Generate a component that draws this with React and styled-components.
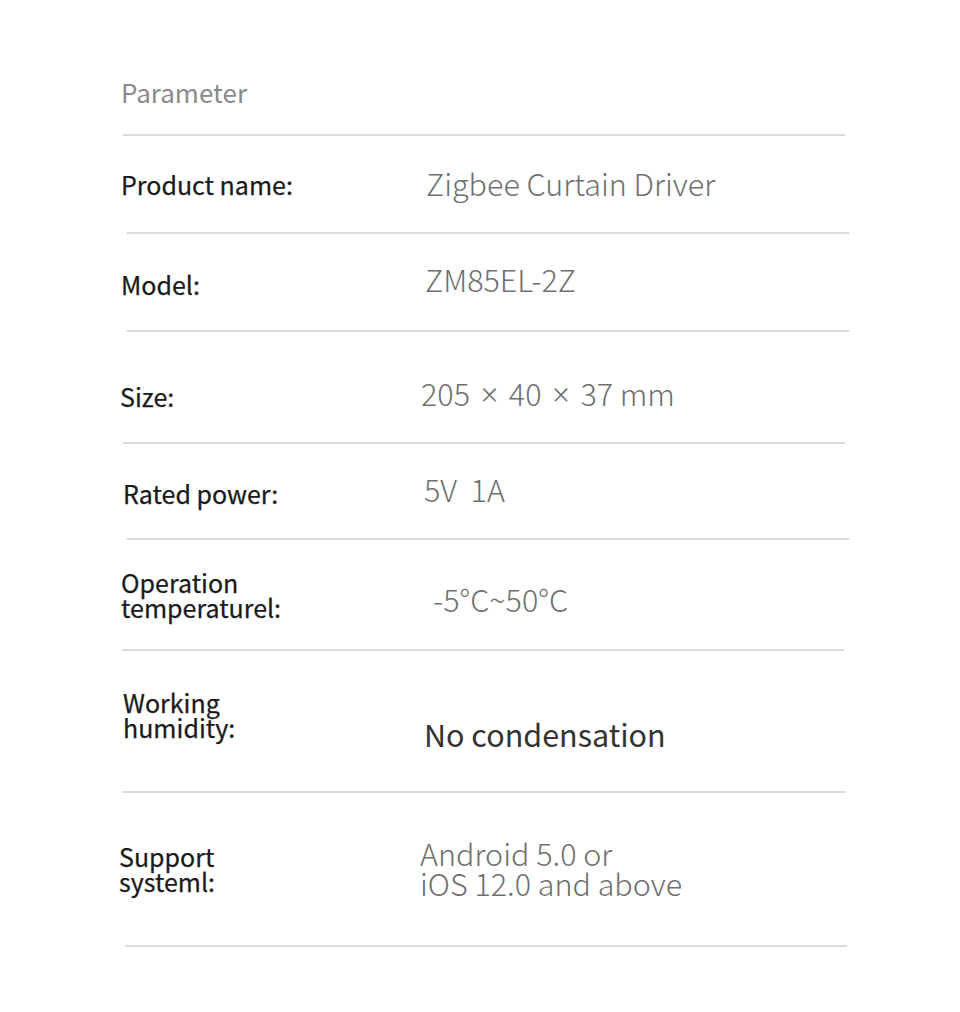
import React from "react";
import styled, { createGlobalStyle } from "styled-components";

const Global = createGlobalStyle`
  html, body { margin: 0; padding: 0; background: #ffffff; }
  body { font-family: "Noto Sans CJK SC", "Noto Sans", sans-serif; }
`;

const Page = styled.div`
  width: 960px;
  min-height: 1012px;
  padding-top: 79px;
  box-sizing: border-box;
  background: #fff;
`;

const Title = styled.h2`
  margin: 0 0 29px 121px;
  font-size: 26px;
  line-height: 26px;
  font-weight: 400;
  color: #8a8a8a;
`;

const Rule = styled.div`
  height: 2px;
  width: 722px;
  margin-left: ${(p) => p.$left}px;
  background: #d9d9d9;
`;

const Row = styled.div`
  display: grid;
  grid-template-columns: 300px 1fr;
  padding-left: 120px;
  height: ${(p) => p.$h}px;
  box-sizing: border-box;
`;

const Label = styled.div`
  padding-top: ${(p) => p.$top}px;
  margin-left: ${(p) => p.$x}px;
  font-size: 25px;
  line-height: ${(p) => p.$lh || 25}px;
  font-weight: 400;
  color: #1a1a1a;
  white-space: pre-wrap;
  -webkit-text-stroke: 0.25px #1a1a1a;
`;

const Value = styled.div`
  padding-top: ${(p) => p.$top}px;
  margin-left: ${(p) => p.$x}px;
  font-size: 30.5px;
  line-height: 30px;
  font-weight: ${(p) => (p.$strong ? 400 : 300)};
  color: ${(p) => (p.$strong ? "#333333" : "#6f6f6f")};
  white-space: pre-wrap;
`;

const Times = styled.span`
  font-family: "Noto Sans", "DejaVu Sans", sans-serif;
  font-weight: 300;
  margin: 0 4px;
`;

const rows = [
  { label: "Product name:", value: "Zigbee Curtain Driver", h: 96, lt: 36, lx: 1, vt: 32, vx: 6, rule: 127 },
  { label: "Model:", value: "ZM85EL-2Z", h: 96, lt: 38, lx: 1, vt: 30, vx: 5, rule: 127 },
  {
    label: "Size:",
    value: (
      <>
        205 <Times>×</Times> 40 <Times>×</Times> 37 mm
      </>
    ),
    h: 110, lt: 52, lx: 0, vt: 46, vx: 1, rule: 123,
  },
  { label: "Rated power:", value: "5V  1A", h: 94, lt: 37, lx: 3, vt: 30, vx: 4, rule: 127 },
  { label: "Operation\ntemperaturel:", value: "-5°C~50°C", h: 109, lt: 30, lx: 1, vt: 44, vx: 13, rule: 122 },
  { label: "Working\nhumidity:", value: "No condensation", h: 140, lt: 39, lx: 3, vt: 68, vx: 4, strong: true, rule: 123 },
  { label: "Support\nsysteml:", value: "Android 5.0 or\niOS 12.0 and above", h: 152, lt: 51, lx: -1, vt: 45, vx: 0, rule: 125 },
];

export default function App() {
  return (
    <Page>
      <Global />
      <Title>Parameter</Title>
      <Rule $left={123} />
      {rows.map((r) => (
        <React.Fragment key={r.label}>
          <Row $h={r.h}>
            <Label $top={r.lt} $x={r.lx} $lh={r.lh}>{r.label}</Label>
            <Value $top={r.vt} $x={r.vx} $strong={r.strong}>{r.value}</Value>
          </Row>
          <Rule $left={r.rule} />
        </React.Fragment>
      ))}
    </Page>
  );
}
